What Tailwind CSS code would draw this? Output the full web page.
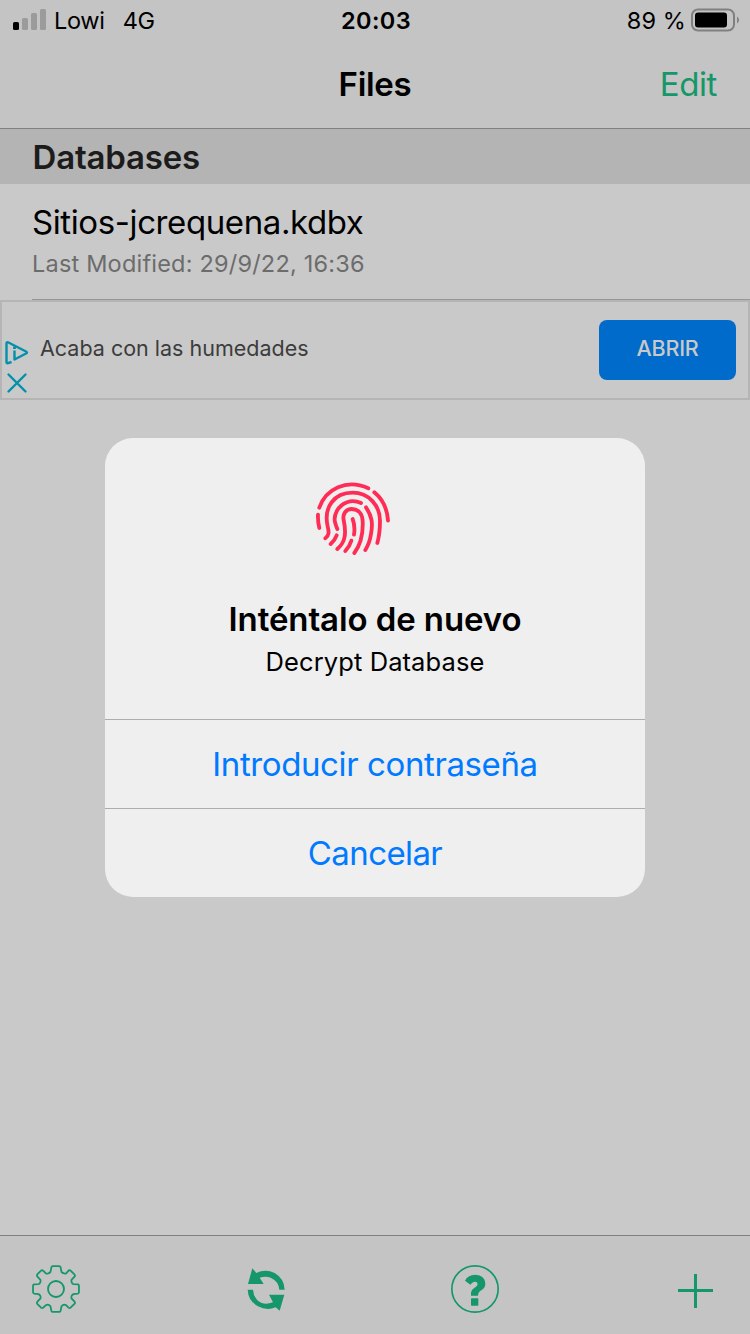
<!DOCTYPE html>
<html lang="es">
<head>
<meta charset="utf-8">
<title>Files</title>
<script src="https://cdn.jsdelivr.net/npm/@tailwindcss/browser@4"></script>
</head>
<body class="font-['Inter','Noto_Sans',sans-serif] text-black">
<div class="relative flex h-[1334px] w-[750px] flex-col overflow-hidden bg-[#c9c9c9]">
  <header class="h-[129px] shrink-0 border-b border-[#808080] bg-[#c4c4c4]">
    <div class="grid h-10 grid-cols-3 items-center pr-[11px] pl-[13px] text-[23.5px]">
      <div class="flex items-center">
        <svg class="h-[22px] w-[34px]" viewBox="0 0 34 22"><rect y="13" width="6" height="8" rx="1.500"/><g fill="#9b9b9b"><rect x="9" y="9" width="6" height="12" rx="1.500"/><rect x="18" y="4" width="6" height="17" rx="1.500"/><rect x="27" y="0" width="6" height="21" rx="1.500"/></g></svg>
        <span class="mt-[2px] ml-[7px] tracking-[-0.3px]">Lowi</span><span class="mt-[2px] ml-[18px] tracking-[-0.3px]">4G</span>
      </div>
      <span class="mt-[2px] text-center font-semibold tracking-[0.4px]">20:03</span>
      <div class="flex items-center justify-end whitespace-nowrap">
        <span class="mt-[2px] tracking-[0.1px]">89 %</span>
        <svg class="ml-[5px] h-6 w-12" viewBox="0 0 48 24"><rect x="1" y="1.500" width="42" height="21" rx="6" fill="none" stroke="#808080" stroke-width="2"/><rect x="4" y="4.500" width="32" height="15" rx="3"/><path d="M46 8.500q2 1 2 3.500t-2 3.500z" fill="#808080"/></svg>
      </div>
    </div>
    <div class="grid h-[88px] grid-cols-3 items-center px-[33px] pt-[2px] text-[33px]">
      <span></span><h1 class="text-center font-semibold tracking-[-0.3px]">Files</h1><span class="text-right tracking-[-0.4px] text-[#159769]">Edit</span>
    </div>
  </header>
  <h2 class="flex h-[55px] shrink-0 items-center bg-[#b4b4b4] pt-[2px] pl-[32.5px] text-[33px] font-semibold tracking-[-0.2px] text-[#1c1c1c]">Databases</h2>
  <div class="ml-8 h-[116px] shrink-0 border-b border-[#969696] pt-4">
    <div class="text-[33px] leading-[44px] tracking-[-0.4px]">Sitios-jcrequena.kdbx</div>
    <div class="mt-px text-[23.5px] leading-[38px] tracking-[0.2px] text-[#6c6c6c]">Last Modified: 29/9/22, 16:36</div>
  </div>
  <div class="flex h-[100px] shrink-0 items-center border-2 border-[#b5b5b5] pr-3">
    <svg class="mt-[31px] ml-[2px] h-[56px] w-[26px]" viewBox="0 0 26 56" fill="none" stroke="#0390ab" stroke-width="2.400"><path d="M7.500 24 4 25.200Q2.500 25.500 2.500 24V5.500Q2.500 3.500 4.500 4.500L22 13.500Q24 14.500 22 15.500L10.500 21.500V12.500" stroke-linejoin="round"/><path d="M10.500 8.500v2.500" stroke-width="2.800"/><path d="M4.500 36.500 21.500 53.500M21.500 36.500 4.500 53.500" stroke-linecap="round"/></svg>
    <span class="ml-[10px] -mt-[3px] text-[21.5px] text-[#3c3c3c]">Acaba con las humedades</span>
    <span class="ml-auto flex h-[60px] w-[137px] items-center justify-center rounded-lg bg-[#006bca] pb-[3px] text-[21.5px] font-medium tracking-[-0.2px] text-[#c9c9c9]">ABRIR</span>
  </div>
  <main class="grow"></main>
  <footer class="flex h-[99px] shrink-0 items-start border-t border-[#808080] bg-[#c4c4c4] pt-[26px] pl-[30px] text-[#159769]">
    <svg class="h-[54px] w-[52px]" viewBox="0 0 156 162" fill="none" stroke="currentColor" stroke-width="5.500" stroke-linejoin="round"><circle cx="78" cy="81" r="24"/><path transform="translate(2.300 2.400) scale(.97)" d="M64 13Q65 10 68 10H88Q91 10 92 13L95 28Q98 32 103 33Q107 34 110 32L117 24Q120 22 123 24L135 36Q138 39 136 42L126 53Q125 57 127 61Q128 65 132 66L146 67Q149 68 149 71V91Q149 94 146 95L132 97Q128 99 126 103Q125 107 126 110L136 121Q138 124 135 127L123 139Q120 141 117 139L109 131Q105 129 101 130Q97 131 95 135L92 149Q91 152 88 152H68Q65 152 64 149L61 135Q59 131 55 130Q51 129 47 131L38 139Q35 141 32 139L20 127Q18 124 20 121L30 110Q31 107 30 103Q28 99 24 97L10 95Q7 94 7 91V71Q7 68 10 67L24 66Q28 65 29 61Q31 57 30 53L20 42Q18 39 20 36L32 24Q35 22 38 24L46 32Q49 34 54 33Q58 32 61 28Z"/></svg>
    <svg class="mt-[3px] ml-[165px] h-[48px] w-[40px]" viewBox="0 0 120 144"><g fill="currentColor"><path d="M16 10 28 24Q55 11 83 24Q112 41 113 74H97Q95 49 71 38Q56 33 38 38L50 57H3Z"/><path d="M2 74H18Q20 103 44 114Q59 119 78 112L66 89H112L98 137L86 127Q60 138 33 124Q4 108 2 74Z"/></g></svg>
    <svg class="ml-[163px] h-[54px] w-[50px]" viewBox="0 0 150 162"><circle cx="75" cy="81" r="69.500" fill="none" stroke="currentColor" stroke-width="5"/><g fill="currentColor"><path d="M45 56Q52 39 76 38Q105 39 106 65Q106 77 94 85Q84 91 84 101H63V92Q64 82 78 74Q85 69 82 63Q79 58 71 60Q66 62 61 68Z"/><rect x="63" y="109" width="22" height="22" rx="2"/></g></svg>
    <svg class="mt-[11px] ml-[177px] h-9 w-9" viewBox="0 0 36 36"><path d="M18.500 1v34M1 17.500h35" stroke="currentColor" stroke-width="3"/></svg>
  </footer>

  <section class="absolute top-[438px] left-[105px] flex h-[459px] w-[540px] flex-col rounded-[28px] bg-[#efefef] text-center">
    <div class="h-[281px] pt-8">
      <svg class="ml-[195px] h-[95px] w-[105px]" viewBox="0 1 315 285" fill="none" stroke="#ff2d55" stroke-width="11.500" stroke-linecap="round"><path d="M58 114C77 58 140 26 205 56M223 68C246 87 262 118 264 153M54 135Q53 156 58 175M76 206C88 197 87 187 83 170C70 112 103 69 158 69C207 69 240 108 240 154Q240 191 232 220M183 100C154 87 124 99 111 123C99 146 104 158 112 178M198 113C216 139 219 161 213 193Q209 220 196 241M163 250C182 225 190 196 188 154C187 130 173 118 155 118C138 118 127 133 131 151C139 190 137 217 112 238M158 148Q166 170 162 195M154 213Q149 230 136 244M110 197Q104 213 92 223"/></svg>
      <h3 class="mt-8 text-[33px] leading-[44px] font-semibold tracking-[-0.1px]">Inténtalo de nuevo</h3>
      <p class="mt-[4px] text-[25.5px] leading-[34px] tracking-[0.1px]">Decrypt Database</p>
    </div>
    <div class="flex h-[89px] items-center justify-center border-t border-[#adadad] pt-[2px] text-[33px] tracking-[-0.4px] text-[#007aff]">Introducir contraseña</div>
    <div class="flex h-[89px] items-center justify-center border-t border-[#adadad] pt-[2px] text-[33px] tracking-[-0.6px] text-[#007aff]">Cancelar</div>
  </section>
</div>
</body>
</html>
